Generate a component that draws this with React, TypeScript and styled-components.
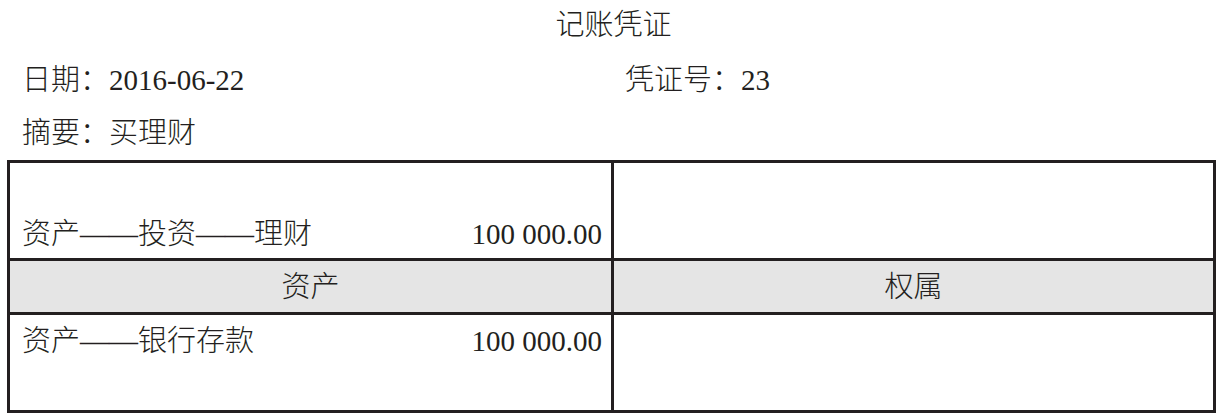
import React from "react";
import styled, { createGlobalStyle } from "styled-components";

const GlobalStyle = createGlobalStyle`
  html, body {
    margin: 0;
    padding: 0;
    background: #ffffff;
  }
  body {
    font-family: "Liberation Serif", "Noto Sans CJK SC", serif;
    color: #231f20;
  }
`;

const Page = styled.div`
  width: 1227px;
  height: 420px;
  box-sizing: border-box;
  padding-top: 8px;
  display: flex;
  flex-direction: column;
  font-size: 29px;
  line-height: 34px;
  font-weight: 300;
`;

const Title = styled.div`
  text-align: center;
  height: 34px;
`;

const InfoRow = styled.div<{ $gap: number }>`
  display: grid;
  grid-template-columns: 603px 1fr;
  padding-left: 22px;
  margin-top: ${(p) => p.$gap}px;
  height: 34px;
`;

const Label = styled.span`
  white-space: nowrap;
`;

const Voucher = styled.div`
  margin: 10px 0 0 7px;
  width: 1209px;
  box-sizing: border-box;
  padding: 3px;
  background: #231f20;
  display: grid;
  grid-template-columns: 601px 599px;
  grid-template-rows: 95px 51px 95px;
  gap: 3px;
`;

const EntryCell = styled.div<{ $align: "top" | "bottom" }>`
  background: #ffffff;
  display: flex;
  justify-content: space-between;
  align-items: ${(p) => (p.$align === "bottom" ? "flex-end" : "flex-start")};
  padding: ${(p) => (p.$align === "bottom" ? "0 9px 7px 12px" : "9px 9px 0 12px")};
`;

const EmptyCell = styled.div`
  background: #ffffff;
`;

const HeaderCell = styled.div`
  background: #e5e5e5;
  display: flex;
  align-items: center;
  justify-content: center;
`;

const Amount = styled.span`
  font-family: "Liberation Serif", serif;
  white-space: nowrap;
`;

export default function App() {
  return (
    <>
      <GlobalStyle />
      <Page>
        <Title>记账凭证</Title>
        <InfoRow $gap={21}>
          <Label>日期：2016-06-22</Label>
          <Label>凭证号：23</Label>
        </InfoRow>
        <InfoRow $gap={19}>
          <Label>摘要：买理财</Label>
        </InfoRow>
        <Voucher>
          <EntryCell $align="bottom">
            <span>资产——投资——理财</span>
            <Amount>100 000.00</Amount>
          </EntryCell>
          <EmptyCell />
          <HeaderCell>资产</HeaderCell>
          <HeaderCell>权属</HeaderCell>
          <EntryCell $align="top">
            <span>资产——银行存款</span>
            <Amount>100 000.00</Amount>
          </EntryCell>
          <EmptyCell />
        </Voucher>
      </Page>
    </>
  );
}
